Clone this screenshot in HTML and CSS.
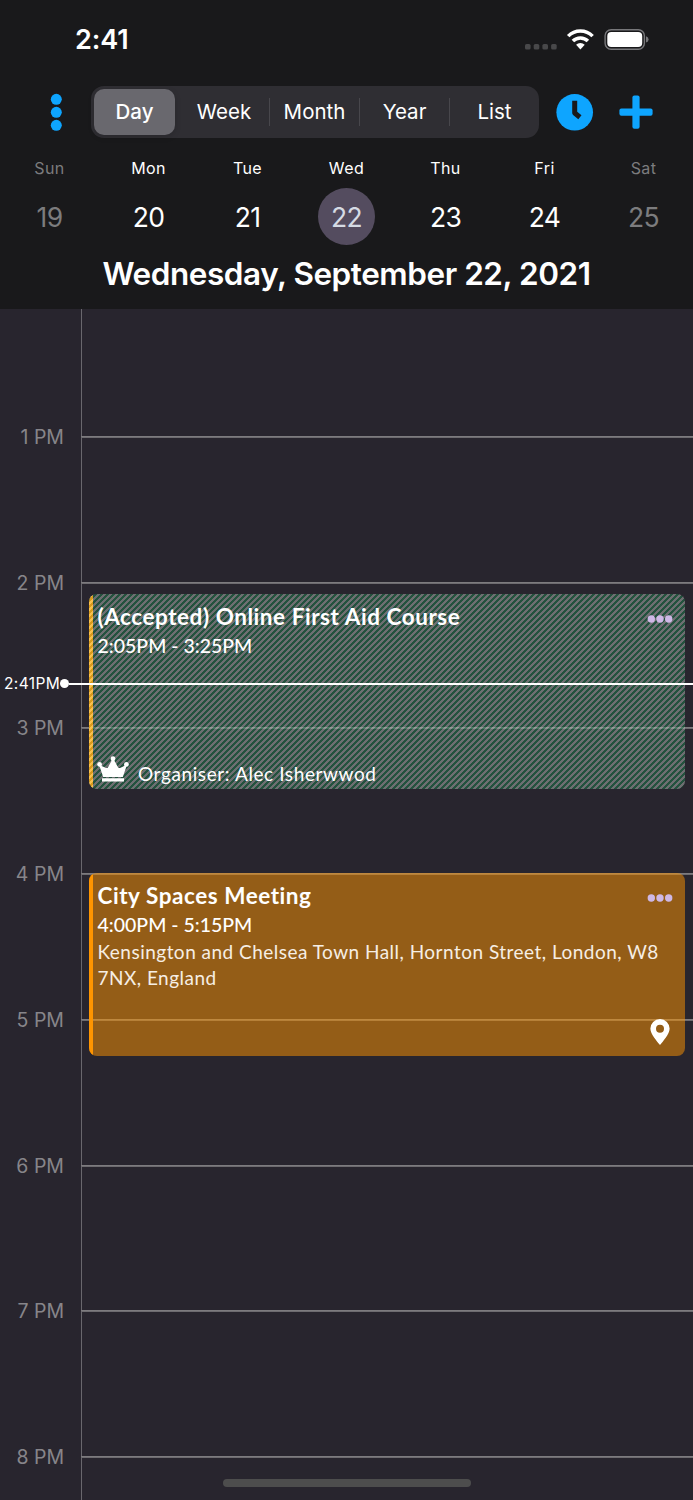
FILE: index.html
```
<!DOCTYPE html>
<html lang="en">
<head>
    <meta charset="UTF-8">
    <meta name="viewport" content="width=device-width, initial-scale=1.0">
    <title>Calendar</title>
    <link rel="stylesheet" href="styles.css">
</head>
<body>
    <div class="phone">
        <header class="header">
            <div class="status">
                <span class="clock">2:41</span>
                <svg class="status-icons" width="126" height="26" viewBox="0 0 126 26">
                    <g fill="#48484a">
                        <rect x="2" y="18" width="5.6" height="5.6" rx="1.6"/>
                        <rect x="10.7" y="18" width="5.6" height="5.6" rx="1.6"/>
                        <rect x="19.4" y="18" width="5.6" height="5.6" rx="1.6"/>
                        <rect x="28.1" y="18" width="5.6" height="5.6" rx="1.6"/>
                    </g>
                    <g fill="none" stroke="#fff" stroke-width="3.5">
                        <path d="M45.2 10.1a17 17 0 0 1 24.4 0"/>
                        <path d="M49.9 15.1a10.6 10.6 0 0 1 15 0"/>
                    </g>
                    <path fill="#fff" d="M53.1 18.7a6.2 6.2 0 0 1 8.6 0l-4.3 4.8z"/>
                    <rect x="82.1" y="3.7" width="39.3" height="19.6" rx="6" fill="none" stroke="#77777a" stroke-width="1.4"/>
                    <rect x="84.3" y="5.9" width="34.9" height="15.2" rx="4" fill="#fff"/>
                    <path fill="#77777a" d="M123 10.2q2.6 1 2.6 3.2t-2.6 3.2z"/>
                </svg>
            </div>
            <div class="toolbar">
                <svg class="menu" width="12" height="38" viewBox="0 0 12 38" fill="#0ea5ff">
                    <circle cx="6.3" cy="6.3" r="5.5"/>
                    <circle cx="6.3" cy="19.3" r="5.5"/>
                    <circle cx="6.3" cy="32.3" r="5.5"/>
                </svg>
                <ul class="tabs">
                    <li class="active">Day</li>
                    <li>Week</li>
                    <li>Month</li>
                    <li>Year</li>
                    <li>List</li>
                </ul>
                <svg class="now-btn" width="38" height="38" viewBox="0 0 38 38">
                    <circle cx="18.7" cy="19.3" r="18.3" fill="#0ea5ff"/>
                    <path d="M18.7 7.8v12.2l5.2 4.3" fill="none" stroke="#19191b" stroke-width="5" stroke-linejoin="round"/>
                </svg>
                <svg class="add-btn" width="34" height="34" viewBox="0 0 34 34" fill="#0ea5ff">
                    <rect x="13.4" y=".6" width="7.2" height="33.2" rx="2"/>
                    <rect x=".4" y="13.6" width="33.2" height="7.2" rx="2"/>
                </svg>
            </div>
            <ul class="week">
                <li class="weekend"><span>Sun</span><b>19</b></li>
                <li><span>Mon</span><b>20</b></li>
                <li><span>Tue</span><b>21</b></li>
                <li class="today"><span>Wed</span><b>22</b></li>
                <li><span>Thu</span><b>23</b></li>
                <li><span>Fri</span><b>24</b></li>
                <li class="weekend"><span>Sat</span><b>25</b></li>
            </ul>
            <h1 class="title">Wednesday, September 22, 2021</h1>
        </header>
        <main class="timeline">
            <ul class="hours">
                <li><span>1 PM</span></li>
                <li><span>2 PM</span></li>
                <li><span>3 PM</span></li>
                <li><span>4 PM</span></li>
                <li><span>5 PM</span></li>
                <li><span>6 PM</span></li>
                <li><span>7 PM</span></li>
                <li><span>8 PM</span></li>
            </ul>
            <section class="event course">
                <div class="event-head">
                    <h2>(Accepted) Online First Aid Course</h2>
                    <svg class="more" width="26" height="8" viewBox="0 0 26 8" fill="#ceb8e6">
                        <circle cx="4.3" cy="4" r="3.7"/>
                        <circle cx="13" cy="4" r="3.7"/>
                        <circle cx="21.7" cy="4" r="3.7"/>
                    </svg>
                </div>
                <p class="time">2:05PM - 3:25PM</p>
                <div class="organiser">
                    <svg width="32" height="26" viewBox="0 0 32 26" fill="#fff">
                        <circle cx="2.6" cy="8.4" r="2.4"/>
                        <circle cx="16" cy="2.7" r="2.4"/>
                        <circle cx="29.4" cy="8.4" r="2.4"/>
                        <path d="M2 8.8L9 12q1.4.4 2-.8L15 4h2l4 7.2q.6 1.2 2 .8l7-3.2-4.2 12.2H6.2zM5 22.2h22v3.2H5z"/>
                    </svg>
                    <span>Organiser: Alec Isherwwod</span>
                </div>
            </section>
            <section class="event meeting">
                <div class="event-head">
                    <h2>City Spaces Meeting</h2>
                    <svg class="more" width="26" height="8" viewBox="0 0 26 8" fill="#ceb8e6">
                        <circle cx="4.3" cy="4" r="3.7"/>
                        <circle cx="13" cy="4" r="3.7"/>
                        <circle cx="21.7" cy="4" r="3.7"/>
                    </svg>
                </div>
                <p class="time">4:00PM - 5:15PM</p>
                <p class="place">Kensington and Chelsea Town Hall, Hornton Street, London, W8<br>7NX, England</p>
                <svg class="pin" width="20" height="26" viewBox="0 0 20 26">
                    <path fill="#fff" fill-rule="evenodd" d="M10 0a9.6 9.6 0 0 1 9.6 9.8C19.6 15 13 22.4 10 26 7 22.4 .4 15 .4 9.8A9.6 9.6 0 0 1 10 0zm0 5.8a4 4 0 1 0 0 8 4 4 0 0 0 0-8z"/>
                </svg>
            </section>
            <div class="now"><span>2:41PM</span><i></i></div>
            <div class="home-bar"></div>
        </main>
    </div>
</body>
</html>
```
FILE: styles.css
```
body,ul,h1,h2,p{
    margin: 0;
    padding: 0;
    list-style: none;
}
body{
    background: #28252e;
    color: #fff;
    font-family: Inter, "Liberation Sans", sans-serif;
}
.phone{
    width: 693px;
    height: 1500px;
    overflow: hidden;
    display: flex;
    flex-direction: column;
}

/* header */
.header{
    height: 309px;
    background: #19191b;
    flex: none;
}
.status{
    height: 86px;
    padding: 0 44px 0 75px;
    box-sizing: border-box;
    display: flex;
    justify-content: space-between;
}
.clock{
    font-size: 27px;
    font-weight: 600;
    line-height: 33px;
    margin-top: 23px;
    letter-spacing: -0.1px;
}
.status-icons{
    margin-top: 26px;
    overflow: visible;
}
.toolbar{
    height: 52px;
    padding-left: 50px;
    display: flex;
    align-items: center;
}
.tabs{
    width: 448px;
    height: 52px;
    margin: 0 17px 0 29px;
    padding: 3px 0 3px 3px;
    box-sizing: border-box;
    border-radius: 13px;
    background: #2f2e33;
    display: flex;
    align-items: center;
}
.tabs li{
    flex: none;
    width: 90px;
    box-sizing: border-box;
    line-height: 28px;
    font-size: 20.5px;
    font-weight: 400;
    text-align: center;
    border-left: 1px solid #48474c;
}
.tabs .active{
    width: 81px;
    height: 46px;
    line-height: 46px;
    border: 0;
    border-radius: 10px;
    font-weight: 500;
    background: #69686e;
    box-shadow: 0 2px 6px rgba(0,0,0,.15);
}
.tabs .active + li{
    width: 94px;
    padding-left: 4px;
    border: 0;
}
.add-btn{
    margin-left: 25px;
}
.week{
    display: flex;
    height: 114px;
}
.week li{
    flex: 1;
    display: flex;
    flex-direction: column;
    align-items: center;
}
.week span{
    margin-top: 20px;
    font-size: 16px;
    line-height: 21px;
    letter-spacing: .4px;
}
.week b{
    width: 57px;
    height: 57px;
    margin-top: 9px;
    border-radius: 50%;
    line-height: 58px;
    text-align: center;
    font-size: 26.5px;
    font-weight: 400;
    letter-spacing: -0.7px;
}
.week .weekend{
    color: #7c7c7e;
}
.week .today b{
    background: #544c5f;
    color: #d5dbe4;
}
.title{
    font-size: 31.5px;
    line-height: 44px;
    font-weight: 600;
    text-align: center;
    letter-spacing: -0.45px;
}

/* day view */
.timeline{
    position: relative;
    flex: 1;
    overflow: hidden;
    background: linear-gradient(#69676d,#69676d) 81px 0 / 1px 100% no-repeat #28252e;
}
.hours{
    padding-top: 55px;
}
.hours li{
    height: 145.75px;
    display: flex;
    align-items: center;
    font-size: 19.5px;
    color: #87858a;
}
.hours span{
    width: 64px;
    text-align: right;
}
.hours li::after{
    content: "";
    height: 2px;
    margin-left: auto;
    width: 612px;
    background: linear-gradient(#858386,#656368);
}

.event{
    position: absolute;
    left: 89px;
    width: 596px;
    box-sizing: border-box;
    padding: 8px 12px 0 8.5px;
    border-radius: 8px;
    overflow: hidden;
    font-family: Lato, "Open Sans", sans-serif;
}
.event::before{
    content: "";
    position: absolute;
    left: 0;
    top: 0;
    bottom: 0;
    width: 3.5px;
    background: #ff9500;
}
.event-head{
    display: flex;
    justify-content: space-between;
    align-items: center;
}
.more{
    margin-top: 3px;
}
.event h2{
    font-size: 22.5px;
    line-height: 30px;
    font-weight: 700;
    letter-spacing: .55px;
}
.time{
    font-size: 19.5px;
    line-height: 28px;
    font-weight: 500;
}
/* striped: invitation that has been accepted */
.course{
    top: 285px;
    height: 195px;
    background: linear-gradient(135deg, rgba(32,127,78,.5) 25%, rgba(178,184,180,.5) 25% 50%, rgba(32,127,78,.5) 50% 75%, rgba(178,184,180,.5) 75%) 0 0 / 6px 6px;
}
.course::before{
    background: linear-gradient(135deg, #d99b1c 25%, #f9c04e 25% 50%, #d99b1c 50% 75%, #f9c04e 75%) 0 0 / 6px 6px;
}
.organiser{
    position: absolute;
    left: 8px;
    bottom: 4px;
    display: flex;
    align-items: flex-end;
    gap: 9px;
    font-size: 19px;
    line-height: 22px;
    letter-spacing: .6px;
}
.organiser svg{
    margin-bottom: 3px;
}
.meeting{
    top: 564px;
    height: 183px;
    background: rgba(255,149,0,.5);
}
.place{
    font-size: 19px;
    line-height: 26px;
    letter-spacing: .48px;
    white-space: nowrap;
    color: #f6eee4;
}
.pin{
    position: absolute;
    right: 15px;
    bottom: 11px;
}

/* current time */
.now{
    position: absolute;
    left: 4px;
    right: 0;
    top: 364.5px;
    height: 20px;
    display: flex;
    align-items: center;
    font-size: 15.5px;
    letter-spacing: .4px;
}
.now i{
    width: 9px;
    height: 9px;
    border-radius: 50%;
    background: #fff;
}
.now::after{
    content: "";
    flex: 1;
    height: 2px;
    background: #fff;
}
.home-bar{
    position: absolute;
    left: 223px;
    bottom: 13px;
    width: 248px;
    height: 8px;
    border-radius: 4px;
    background: #4d4d4d;
}
```
